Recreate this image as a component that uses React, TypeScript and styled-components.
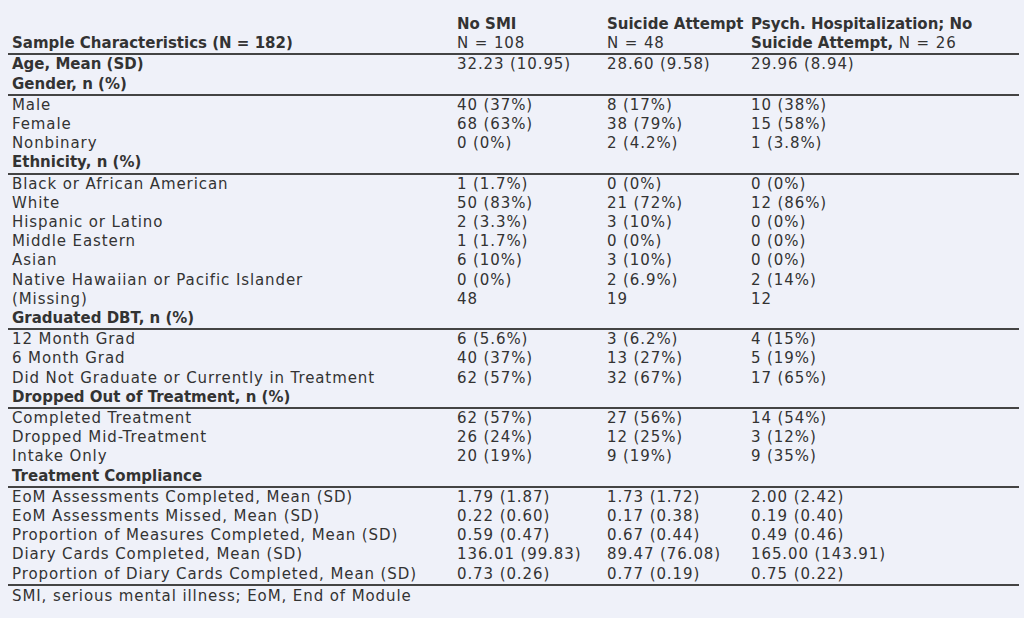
import React from "react";
import styled, { createGlobalStyle } from "styled-components";

const Global = createGlobalStyle`
  html, body {
    margin: 0;
    padding: 0;
    background: #eff1f9;
  }
  body {
    font-family: "DejaVu Sans", "Liberation Sans", sans-serif;
    color: #333333;
  }
`;

const Page = styled.div`
  width: 1024px;
  height: 618px;
  box-sizing: border-box;
  padding: 15px 5px 0 8px;
  background: #eff1f9;
  overflow: hidden;
`;

const Table = styled.table`
  width: 1011px;
  border-collapse: collapse;
  table-layout: fixed;
  font-size: 15px;
  line-height: 19.2px;
  letter-spacing: 0.9px;
`;

const Col = styled.col<{ $w: number }>`
  width: ${(p) => p.$w}px;
`;

const HeadCell = styled.th`
  text-align: left;
  vertical-align: bottom;
  padding: 0 4px;
  font-weight: normal;
  border-bottom: 2px solid #444;
  white-space: nowrap;
`;

const Bold = styled.span`
  font-weight: bold;
  letter-spacing: 0;
`;

const Cell = styled.td<{ $bold?: boolean; $ruled?: boolean }>`
  padding: 0 4px;
  white-space: nowrap;
  font-weight: ${(p) => (p.$bold ? "bold" : "normal")};
  letter-spacing: ${(p) => (p.$bold ? "0" : "0.9px")};
  border-bottom: ${(p) => (p.$ruled ? "2px solid #444" : "none")};
`;

const Foot = styled.td`
  padding: 0 4px;
  line-height: 20px;
`;

type Row = { label: string; vals?: string[]; bold?: boolean; ruled?: boolean };

const rows: Row[] = [
  { label: "Age, Mean (SD)", vals: ["32.23 (10.95)", "28.60 (9.58)", "29.96 (8.94)"], bold: true },
  { label: "Gender, n (%)", bold: true, ruled: true },
  { label: "Male", vals: ["40 (37%)", "8 (17%)", "10 (38%)"] },
  { label: "Female", vals: ["68 (63%)", "38 (79%)", "15 (58%)"] },
  { label: "Nonbinary", vals: ["0 (0%)", "2 (4.2%)", "1 (3.8%)"] },
  { label: "Ethnicity, n (%)", bold: true, ruled: true },
  { label: "Black or African American", vals: ["1 (1.7%)", "0 (0%)", "0 (0%)"] },
  { label: "White", vals: ["50 (83%)", "21 (72%)", "12 (86%)"] },
  { label: "Hispanic or Latino", vals: ["2 (3.3%)", "3 (10%)", "0 (0%)"] },
  { label: "Middle Eastern", vals: ["1 (1.7%)", "0 (0%)", "0 (0%)"] },
  { label: "Asian", vals: ["6 (10%)", "3 (10%)", "0 (0%)"] },
  { label: "Native Hawaiian or Pacific Islander", vals: ["0 (0%)", "2 (6.9%)", "2 (14%)"] },
  { label: "(Missing)", vals: ["48", "19", "12"] },
  { label: "Graduated DBT, n (%)", bold: true, ruled: true },
  { label: "12 Month Grad", vals: ["6 (5.6%)", "3 (6.2%)", "4 (15%)"] },
  { label: "6 Month Grad", vals: ["40 (37%)", "13 (27%)", "5 (19%)"] },
  { label: "Did Not Graduate or Currently in Treatment", vals: ["62 (57%)", "32 (67%)", "17 (65%)"] },
  { label: "Dropped Out of Treatment, n (%)", bold: true, ruled: true },
  { label: "Completed Treatment", vals: ["62 (57%)", "27 (56%)", "14 (54%)"] },
  { label: "Dropped Mid-Treatment", vals: ["26 (24%)", "12 (25%)", "3 (12%)"] },
  { label: "Intake Only", vals: ["20 (19%)", "9 (19%)", "9 (35%)"] },
  { label: "Treatment Compliance", bold: true, ruled: true },
  { label: "EoM Assessments Completed, Mean (SD)", vals: ["1.79 (1.87)", "1.73 (1.72)", "2.00 (2.42)"] },
  { label: "EoM Assessments Missed, Mean (SD)", vals: ["0.22 (0.60)", "0.17 (0.38)", "0.19 (0.40)"] },
  { label: "Proportion of Measures Completed, Mean (SD)", vals: ["0.59 (0.47)", "0.67 (0.44)", "0.49 (0.46)"] },
  { label: "Diary Cards Completed, Mean (SD)", vals: ["136.01 (99.83)", "89.47 (76.08)", "165.00 (143.91)"] },
  { label: "Proportion of Diary Cards Completed, Mean (SD)", vals: ["0.73 (0.26)", "0.77 (0.19)", "0.75 (0.22)"], ruled: true },
];

export default function App() {
  return (
    <Page>
      <Global />
      <Table>
        <colgroup>
          <Col $w={445} />
          <Col $w={150} />
          <Col $w={144} />
          <Col $w={272} />
        </colgroup>
        <thead>
          <tr>
            <HeadCell>
              <Bold>Sample Characteristics (N = 182)</Bold>
            </HeadCell>
            <HeadCell>
              <Bold>No SMI</Bold>
              <br />N = 108
            </HeadCell>
            <HeadCell>
              <Bold>Suicide Attempt</Bold>
              <br />N = 48
            </HeadCell>
            <HeadCell>
              <Bold>Psych. Hospitalization; No</Bold>
              <br />
              <Bold>Suicide Attempt,</Bold> N = 26
            </HeadCell>
          </tr>
        </thead>
        <tbody>
          {rows.map((r) => (
            <tr key={r.label}>
              <Cell $bold={r.bold} $ruled={r.ruled}>
                {r.label}
              </Cell>
              {[0, 1, 2].map((i) => (
                <Cell key={i} $ruled={r.ruled}>
                  {r.vals ? r.vals[i] : ""}
                </Cell>
              ))}
            </tr>
          ))}
        </tbody>
        <tfoot>
          <tr>
            <Foot colSpan={4}>SMI, serious mental illness; EoM, End of Module</Foot>
          </tr>
        </tfoot>
      </Table>
    </Page>
  );
}
